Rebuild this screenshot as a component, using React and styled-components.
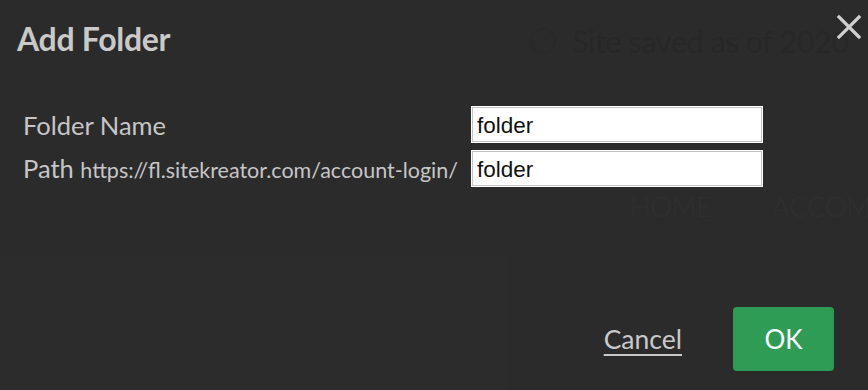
import React, { useState } from 'react';
import styled, { createGlobalStyle } from 'styled-components';

const GlobalStyle = createGlobalStyle`
  html, body {
    margin: 0;
    padding: 0;
    background: #2c2c2c;
  }
  body {
    font-family: Lato, "Open Sans", sans-serif;
    overflow: hidden;
  }
`;

const Screen = styled.div`
  position: relative;
  width: 868px;
  height: 390px;
  overflow: hidden;
  background: #2c2c2c;
`;

// page content behind the modal, barely visible through it
const Page = styled.div`
  display: flex;
  flex-direction: column;
  white-space: nowrap;
`;

const StatusBar = styled.div`
  display: flex;
  align-items: center;
  gap: 16px;
  padding: 22px 0 0 530px;
  color: #222;
  font-size: 31px;
  letter-spacing: -0.6px;
`;

const StatusIcon = styled.span`
  flex-shrink: 0;
  width: 22px;
  height: 22px;
  border-radius: 50%;
  border: 2px solid #262626;
`;

const Nav = styled.div`
  display: flex;
  gap: 60px;
  padding: 130px 0 0 630px;
  color: #363636;
  font-size: 27px;
  font-weight: 300;
`;

const Overlay = styled.div`
  position: absolute;
  inset: 0;
  background: rgba(44, 44, 44, 0.6);
  display: flex;
  flex-direction: column;
`;

const Header = styled.div`
  display: flex;
  justify-content: space-between;
  align-items: flex-start;
  padding: 19px 6px 0 17px;
`;

const Title = styled.h2`
  margin: 0;
  font-size: 32px;
  font-weight: 700;
  color: #c9c9c9;
  line-height: 40px;
  letter-spacing: -0.3px;
`;

const CloseButton = styled.button`
  background: none;
  border: 0;
  padding: 0;
  margin-top: -5px;
  cursor: pointer;
  color: #cfcfcf;
  display: flex;
`;

const Form = styled.div`
  display: grid;
  grid-template-columns: auto 292px;
  justify-content: start;
  column-gap: 13px;
  row-gap: 7px;
  align-items: center;
  padding: 47px 0 0 23px;
`;

const Label = styled.label`
  font-size: 25.5px;
  color: #c6c6c6;
  white-space: nowrap;
  line-height: 30px;
`;

const PathPrefix = styled.span`
  font-size: 21.5px;
`;

const TextInput = styled.input`
  box-sizing: border-box;
  width: 292px;
  height: 37px;
  padding: 2px 5px 0;
  border: 1px solid #fff;
  box-shadow: inset 0 0 0 1px #c4c4c4;
  outline: none;
  background: #fff;
  color: #111;
  font-family: "Liberation Sans", Arial, sans-serif;
  font-size: 22.5px;
`;

const Footer = styled.div`
  margin-top: auto;
  display: flex;
  justify-content: flex-end;
  align-items: center;
  gap: 51px;
  padding: 0 34px 19px 0;
`;

const CancelLink = styled.a`
  font-size: 26.5px;
  color: #c9c9c9;
  text-decoration: underline;
  text-underline-offset: 5px;
  text-decoration-thickness: 2px;
  cursor: pointer;
`;

const OkButton = styled.button`
  width: 101px;
  height: 64px;
  border: 0;
  border-radius: 4px;
  background: #2e9c55;
  color: #fff;
  font-family: Lato, sans-serif;
  font-size: 26px;
  cursor: pointer;
`;

const CloseIcon = () => (
  <svg width="26" height="26" viewBox="0 0 26 26">
    <path d="M3 3 L23 23 M23 3 L3 23" stroke="currentColor" strokeWidth="3.2" strokeLinecap="square" />
  </svg>
);

export default function App() {
  const [name, setName] = useState('folder');
  const [path, setPath] = useState('folder');

  return (
    <Screen>
      <GlobalStyle />
      <Page>
        <StatusBar>
          <StatusIcon />
          <span>Site saved as of 2020</span>
        </StatusBar>
        <Nav>
          <span>HOME</span>
          <span>ACCOM</span>
        </Nav>
      </Page>
      <Overlay>
        <Header>
          <Title>Add Folder</Title>
          <CloseButton aria-label="Close">
            <CloseIcon />
          </CloseButton>
        </Header>
        <Form>
          <Label htmlFor="folder-name">Folder Name</Label>
          <TextInput id="folder-name" value={name} onChange={(e) => setName(e.target.value)} />
          <Label htmlFor="folder-path">
            Path <PathPrefix>https://fl.sitekreator.com/account-login/</PathPrefix>
          </Label>
          <TextInput id="folder-path" value={path} onChange={(e) => setPath(e.target.value)} />
        </Form>
        <Footer>
          <CancelLink>Cancel</CancelLink>
          <OkButton>OK</OkButton>
        </Footer>
      </Overlay>
    </Screen>
  );
}
